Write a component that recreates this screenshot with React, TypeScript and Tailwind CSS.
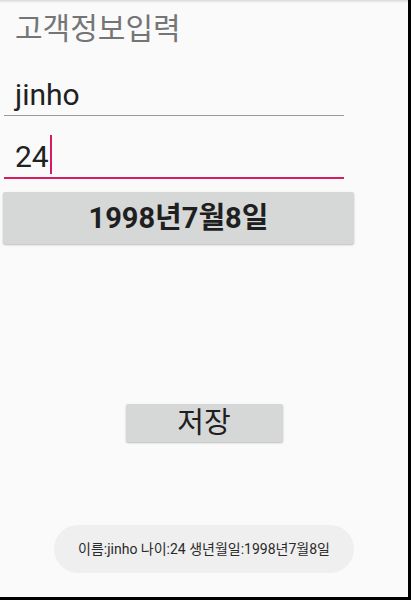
import React from "react";

const font = { fontFamily: 'Roboto, "Noto Sans CJK KR", "Noto Sans", sans-serif' };

export default function App() {
  return (
    <div
      className="w-[411px] h-[600px] bg-[#fafafa] border-r-[3px] border-b-[3px] border-black shadow-[inset_0_3px_3px_-2px_rgba(0,0,0,0.18)] flex flex-col"
      style={font}
    >
      <div className="h-[60px] pl-[15px] text-[30px] leading-[58px] text-[#757575]">고객정보입력</div>

      <div className="ml-[4px] w-[340px] pt-[17px] pb-[3px] border-b border-[#9a9a9a]">
        <div className="pl-[11px] text-[30px] leading-[35px] text-[#212121]">jinho</div>
      </div>

      <div className="ml-[4px] w-[340px] pt-[19px] pb-[3px] border-b-2 border-[#d81b60]">
        <div className="pl-[11px] flex items-end">
          <span className="text-[30px] leading-[35px] text-[#212121]">24</span>
          <span className="w-[2px] h-[39px] bg-[#d81b60] ml-[1px]" />
        </div>
      </div>

      <div className="mt-[13px] ml-[3px] w-[351px] h-[52px] bg-[#d6d7d7] rounded-[2px] shadow-[0_1px_2px_rgba(0,0,0,0.25)] flex items-center justify-center">
        <span className="text-[29px] font-bold text-[#1f1f1f] leading-none">1998년7월8일</span>
      </div>

      <div className="mt-[160px] mx-auto w-[157px] h-[38px] bg-[#d6d7d7] rounded-[2px] shadow-[0_1px_2px_rgba(0,0,0,0.25)] flex items-center justify-center">
        <span className="text-[29px] text-[#1f1f1f] leading-none">저장</span>
      </div>

      <div className="mt-[83px] mx-auto w-[300px] h-[48px] rounded-full bg-[#efefef] flex items-center justify-center">
        <span className="text-[14px] text-[#2a2a2a] leading-none">이름:jinho 나이:24 생년월일:1998년7월8일</span>
      </div>
    </div>
  );
}
